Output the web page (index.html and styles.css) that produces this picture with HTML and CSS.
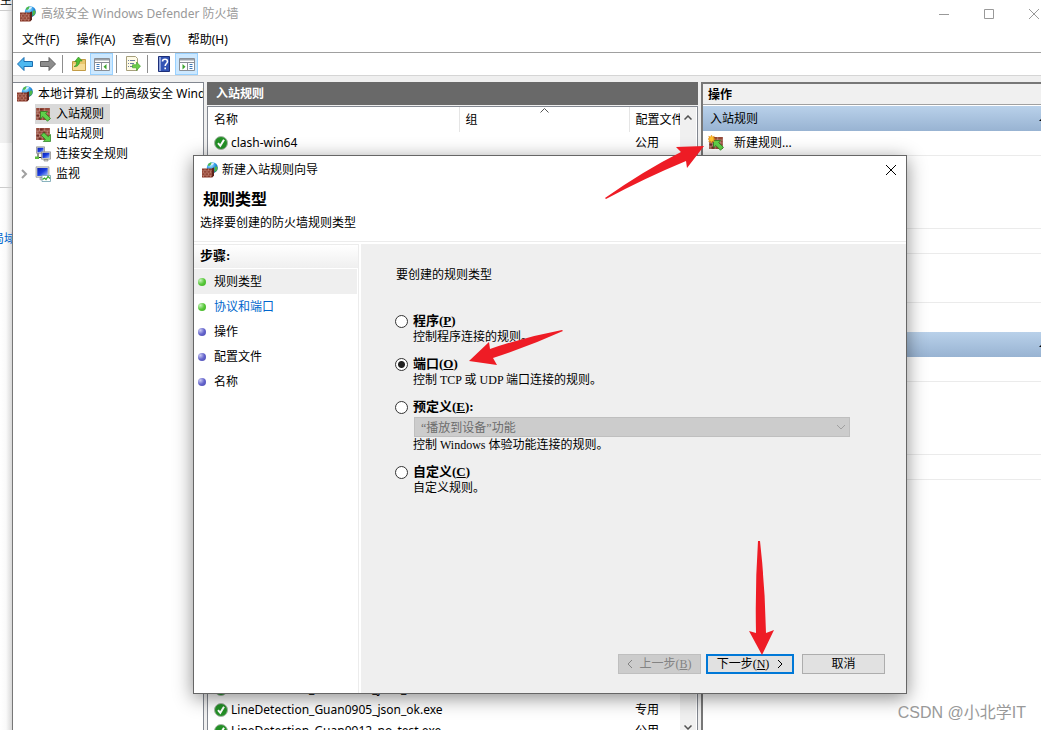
FILE: index.html
```html
<!DOCTYPE html>
<html lang="zh-CN">
<head>
    <meta charset="UTF-8">
    <meta name="viewport" content="width=device-width, initial-scale=1.0">
    <title>高级安全 Windows Defender 防火墙</title>
    <link rel="stylesheet" href="styles.css">
</head>
<body>
    <svg width="0" height="0" class="sprite">
        <defs>
            <radialGradient id="g-globe" cx="35%" cy="25%" r="80%">
                <stop offset="0" stop-color="#b8ecff"/><stop offset=".5" stop-color="#2d9be8"/><stop offset="1" stop-color="#0b4da0"/>
            </radialGradient>
            <linearGradient id="g-screen" x1="0" y1="0" x2="1" y2="1">
                <stop offset="0" stop-color="#0a1fae"/><stop offset=".5" stop-color="#1c3fe0"/><stop offset="1" stop-color="#a9c4ff"/>
            </linearGradient>
            <symbol id="wall" viewBox="0 0 16 14">
                <path fill="#96493a" d="M0 0h16v14H0z"/>
                <path stroke="#c9a397" stroke-width=".7" d="M0 3.500h16M0 7h16M0 10.500h16M4 0v3.500M10 0v3.500M2 3.500v3.500M7 3.500v3.500M13 3.500v3.500M4 7v3.500M10 7v3.500M2 10.500v3.500M7 10.500v3.500M13 10.500v3.500"/>
                <path fill="#6c2d24" d="M4.500 1h3v2h-3zM7.500 4.500h3v2h-3zM.5 7.800h3v2h-3zM3 11.300h3v2H3z"/>
            </symbol>
            <symbol id="firewall" viewBox="0 0 16 16">
                <circle cx="10.300" cy="5.700" r="5.500" fill="url(#g-globe)"/>
                <path fill="#4fb84a" d="M6 2.500C7 1 8.500.4 9.500.6S9 2.800 8 3.500 5.500 4 6 2.500zM13 5c1-.8 2.300-.5 2.500.7s-.8 3.300-2 4-1.300-1-1-2S12.300 5.500 13 5z"/>
                <path fill="#fff" opacity=".7" d="M9.500 1.300c1-.6 2-.5 2.500 0S10.800 2.800 10 3.200 8.500 2 9.500 1.300z"/>
                <path fill="#8a3b2c" d="M0 6.500h10l2-1v8L10 15.500H0z"/>
                <path fill="#5e241c" d="M10 6.500l2-1v8l-2 2z"/>
                <path fill="none" stroke="#c98f80" stroke-width=".6" d="M0 8.800h10M0 11h10M0 13.200h10M3 6.500v2.300M6.500 6.500v2.300M1.500 8.800V11M5 8.800V11M8.500 8.800V11M3 11v2.200M6.500 11v2.200M1.500 13.200v2.300M5 13.200v2.300M8.500 13.200v2.300"/>
            </symbol>
            <symbol id="inbound" viewBox="0 0 16 16">
                <use href="#wall" y="2" width="16" height="12"/>
                <path fill="#5fd04a" stroke="#237a18" stroke-width=".7" d="M5.500 5.500h7.200l-2 2.200 4.800 4.600-3 3-4.600-4.700-2.400 2.200z"/>
            </symbol>
            <symbol id="outbound" viewBox="0 0 16 16">
                <use href="#wall" y="2" width="16" height="12"/>
                <path fill="#5fd04a" stroke="#237a18" stroke-width=".7" d="M15.500 15.500H8.300l2.100-2.100-4.200-4.100 2.700-2.700 4.300 4.100 2.300-2.200z"/>
            </symbol>
            <symbol id="newrule" viewBox="0 0 16 16">
                <use href="#inbound" width="16" height="16"/>
                <path fill="#ffc22e" stroke="#e08a10" stroke-width=".5" d="M3.500 0l.8 2 2-.8-.8 2 2 .8-2 .8.8 2-2-.8-.8 2-.8-2-2 .8.8-2-2-.8 2-.8-.8-2 2 .8z"/>
            </symbol>
            <symbol id="network" viewBox="0 0 16 16">
                <path fill="#d9d9d2" stroke="#777" stroke-width=".6" d="M1.500.8h8v6.500h-8z"/>
                <path fill="url(#g-screen)" d="M2.500 1.800h6v4.500h-6z"/>
                <path fill="none" stroke="#222" d="M3 7.500v4h4"/>
                <path fill="#5cc03c" d="M0 10.500h4v2.500H0z"/>
                <path fill="#d9d9d2" stroke="#777" stroke-width=".6" d="M6.500 5.800h9v7.400h-9zM9 13.500h4V15H9z"/>
                <path fill="url(#g-screen)" d="M7.500 6.800h7v5.200h-7z"/>
            </symbol>
            <symbol id="monitor" viewBox="0 0 16 16">
                <path fill="#d9d9d2" stroke="#888" stroke-width=".6" d="M1 .8h13v10.500H1zM5 11.500h4v2.300H5z"/>
                <path fill="url(#g-screen)" d="M2.300 2h10.400v8H2.300z"/>
                <path fill="#fff" stroke="#6d9fae" stroke-width=".8" d="M7 9.500h8.500v6H7z"/>
                <path fill="none" stroke="#39a82c" stroke-width="1.200" d="M7.500 13.500l2-1.500 1.500 1.500 2-3 2 2"/>
            </symbol>
            <symbol id="ok" viewBox="0 0 14 14">
                <circle cx="7" cy="7" r="6.500" fill="#239026" stroke="#a8b5a8"/>
                <path fill="none" stroke="#fff" stroke-width="2" d="M4 7.200l2.300 2.600L10 3.800"/>
            </symbol>
            <symbol id="close" viewBox="0 0 12 12">
                <path fill="none" stroke="currentColor" d="M1 1l10 10M11 1L1 11"/>
            </symbol>
        </defs>
    </svg>

    <div class="desktop">
        <div class="behind">
            <div class="behind-tab">至</div>
            <div class="behind-bar"></div>
            <div class="behind-head"></div>
            <div class="behind-item"></div>
            <div class="behind-body"><a href="#">局域</a></div>
        </div>

        <main class="window">
            <header class="titlebar">
                <svg class="icon"><use href="#firewall"/></svg>
                <h1>高级安全 Windows Defender 防火墙</h1>
                <div class="caption-buttons">
                    <button aria-label="最小化"><svg viewBox="0 0 12 12"><path fill="none" stroke="currentColor" d="M1 6.500h10"/></svg></button>
                    <button aria-label="最大化"><svg viewBox="0 0 12 12"><path fill="none" stroke="currentColor" d="M1.500 1.500h9v9h-9z"/></svg></button>
                    <button aria-label="关闭"><svg><use href="#close"/></svg></button>
                </div>
            </header>

            <nav class="menubar">
                <button>文件(F)</button>
                <button>操作(A)</button>
                <button>查看(V)</button>
                <button>帮助(H)</button>
            </nav>

            <div class="toolbar">
                <button aria-label="后退"><svg class="icon" viewBox="0 0 16 16"><path fill="#4db8f0" stroke="#1a6db0" d="M.5 8L7 1.500v4h8.500v5H7v4z"/></svg></button>
                <button aria-label="前进"><svg class="icon" viewBox="0 0 16 16"><path fill="#8d8d8d" stroke="#636363" d="M15.500 8L9 1.500v4H.5v5H9v4z"/></svg></button>
                <span class="separator"></span>
                <button aria-label="上移"><svg class="icon" viewBox="0 0 16 16"><path fill="#e9c66c" stroke="#c39c46" d="M1.500 5.500H8l1-2h5.500v11h-13z"/><path fill="#f6dc96" d="M2 8h12v6H2z"/><path fill="#4fbf35" stroke="#2c8a1c" stroke-width=".6" d="M3 10.500c2-.5 2.500-2 2.700-5H3.800L7.500 1l3.700 4H8.700C8.500 8.500 6.500 11 3 10.500z"/></svg></button>
                <button class="pressed" aria-label="显示/隐藏控制台树"><svg class="icon" viewBox="0 0 16 16"><path fill="#fff" stroke="#8a8f96" d="M.5 2.500h15v12H.5z"/><path fill="#9aa0a8" d="M1 3h14v1.500H1z"/><path stroke="#8a8f96" d="M1 6.500h14M7.500 7v7"/><path stroke="#3e78b8" d="M2.500 8.500h3M2.500 10.500h3M2.500 12.500h3"/><path fill="#3da52e" d="M12.500 8v5.500L9.500 10.700z"/></svg></button>
                <span class="separator"></span>
                <button aria-label="导出列表"><svg class="icon" viewBox="0 0 16 16"><path fill="#fffbe6" stroke="#a69f7c" d="M1.500.5h9l2 2v12h-11z"/><path stroke="#6d7fa3" d="M3 4.500h1M5 4.500h5M3 7.500h1M5 7.500h4M3 10.500h1M5 10.500h3"/><path fill="#6bcf4b" stroke="#3c9a28" stroke-width=".6" d="M7.500 8.700h4V6l4 4.200-4 4.300v-2.700h-4z"/></svg></button>
                <span class="separator"></span>
                <button aria-label="帮助"><svg class="icon" viewBox="0 0 16 16"><path fill="#3354b5" stroke="#1d2f78" d="M2.500.5h11v15h-11z"/><path fill="#8da2dc" d="M3 1h2v14H3z"/><path fill="none" stroke="#fff" stroke-width="1.600" d="M6.500 5.500c0-3 5-3 5 0 0 2-2.300 2-2.300 4.500M9.200 11.500v1.800"/></svg></button>
                <button class="pressed" aria-label="显示/隐藏操作窗格"><svg class="icon" viewBox="0 0 16 16"><path fill="#fff" stroke="#8a8f96" d="M.5 2.500h15v12H.5z"/><path fill="#9aa0a8" d="M1 3h14v1.500H1z"/><path stroke="#8a8f96" d="M1 6.500h14M8.500 7v7"/><path stroke="#3e78b8" d="M10.500 8.500h3M10.500 10.500h3M10.500 12.500h3"/><path fill="#3da52e" d="M3.500 8v5.500l3-2.800z"/></svg></button>
            </div>

            <div class="panes">
                <ul class="tree">
                    <li class="root"><svg class="icon"><use href="#firewall"/></svg><span>本地计算机 上的高级安全 Windows</span></li>
                    <li class="selected"><svg class="icon"><use href="#inbound"/></svg><span>入站规则</span></li>
                    <li><svg class="icon"><use href="#outbound"/></svg><span>出站规则</span></li>
                    <li><svg class="icon"><use href="#network"/></svg><span>连接安全规则</span></li>
                    <li class="expandable"><svg class="expander" viewBox="0 0 8 12"><path fill="none" stroke="#a0a0a0" stroke-width="2" d="M2 2l4 4-4 4"/></svg><svg class="icon"><use href="#monitor"/></svg><span>监视</span></li>
                </ul>

                <section class="rules">
                    <h2>入站规则</h2>
                    <div class="rules-list">
                        <table>
                            <thead>
                                <tr>
                                    <th class="col-name">名称</th>
                                    <th class="col-group">组<svg class="sort" viewBox="0 0 9 5"><path fill="none" stroke="#555" d="M.5 4.500l4-4 4 4"/></svg></th>
                                    <th class="col-profile">配置文件</th>
                                </tr>
                            </thead>
                            <tbody>
                                <tr><td><svg class="ok"><use href="#ok"/></svg>clash-win64</td><td></td><td>公用</td></tr>
                                <tr class="covered"><td colspan="3"></td></tr>
                                <tr><td><svg class="ok"><use href="#ok"/></svg>LineDetection_Guan0904_json_ok.exe</td><td></td><td>专用</td></tr>
                                <tr><td><svg class="ok"><use href="#ok"/></svg>LineDetection_Guan0905_json_ok.exe</td><td></td><td>专用</td></tr>
                                <tr><td><svg class="ok"><use href="#ok"/></svg>LineDetection_Guan0912_no_test.exe</td><td></td><td>公用</td></tr>
                            </tbody>
                        </table>
                        <div class="scrollbar">
                            <svg viewBox="0 0 8 5"><path fill="none" stroke="#505050" stroke-width="1.500" d="M.5 4.500L4 1l3.500 3.500"/></svg>
                            <svg viewBox="0 0 8 5"><path fill="none" stroke="#505050" stroke-width="1.500" d="M.5.5L4 4 7.500.5"/></svg>
                        </div>
                    </div>
                </section>

                <aside class="actions">
                    <h2>操作</h2>
                    <h3>入站规则<svg viewBox="0 0 8 4"><path d="M0 4l4-4 4 4z"/></svg></h3>
                    <ul>
                        <li><svg class="icon"><use href="#newrule"/></svg><a href="#">新建规则...</a></li>
                        <li class="tall"></li>
                        <li></li>
                        <li class="double"></li>
                        <li class="last"></li>
                    </ul>
                    <h3><svg viewBox="0 0 8 4"><path d="M0 4l4-4 4 4z"/></svg></h3>
                    <ul>
                        <li></li>
                        <li class="tall"></li>
                        <li></li>
                    </ul>
                </aside>
            </div>
        </main>

        <div class="dialog" role="dialog" aria-labelledby="dialog-title">
            <header class="dialog-title">
                <svg class="icon"><use href="#firewall"/></svg>
                <h2 id="dialog-title">新建入站规则向导</h2>
                <button aria-label="关闭"><svg><use href="#close"/></svg></button>
            </header>
            <div class="dialog-head">
                <h3>规则类型</h3>
                <p>选择要创建的防火墙规则类型</p>
            </div>
            <div class="dialog-body">
                <nav class="steps">
                    <h4>步骤:</h4>
                    <ol>
                        <li class="done current">规则类型</li>
                        <li class="done"><a href="#">协议和端口</a></li>
                        <li>操作</li>
                        <li>配置文件</li>
                        <li>名称</li>
                    </ol>
                </nav>
                <form class="page">
                    <p class="question">要创建的规则类型</p>
                    <div class="options">
                        <div class="option">
                            <input type="radio" name="type" id="type-program">
                            <label for="type-program">程序(<u>P</u>)</label>
                            <p>控制程序连接的规则。</p>
                        </div>
                        <div class="option">
                            <input type="radio" name="type" id="type-port" checked>
                            <label for="type-port">端口(<u>O</u>)</label>
                            <p>控制 TCP 或 UDP 端口连接的规则。</p>
                        </div>
                        <div class="option">
                            <input type="radio" name="type" id="type-predefined">
                            <label for="type-predefined">预定义(<u>E</u>):</label>
                            <div class="select">
                                <select disabled aria-label="预定义">
                                    <option>“播放到设备”功能</option>
                                </select>
                                <svg viewBox="0 0 10 6"><path fill="none" stroke="#a0a0a0" d="M1 1l4 4 4-4"/></svg>
                            </div>
                            <p>控制 Windows 体验功能连接的规则。</p>
                        </div>
                        <div class="option">
                            <input type="radio" name="type" id="type-custom">
                            <label for="type-custom">自定义(<u>C</u>)</label>
                            <p>自定义规则。</p>
                        </div>
                    </div>
                    <div class="buttons">
                        <button type="button" disabled><svg viewBox="0 0 6 10"><path fill="none" stroke="currentColor" d="M5 1L1 5l4 4"/></svg><span>上一步(<u>B</u>)</span></button>
                        <button type="button" class="default"><span>下一步(<u>N</u>)</span><svg viewBox="0 0 6 10"><path fill="none" stroke="currentColor" d="M1 1l4 4-4 4"/></svg></button>
                        <button type="button" class="cancel">取消</button>
                    </div>
                </form>
            </div>
        </div>

        <svg class="arrows" width="1041" height="730" viewBox="0 0 1041 730">
            <path d="M605 198Q645 170 681 152L676 147 704 146 687 168 686 161Q645 178 606 199z"/>
            <path d="M562 330Q525 337 490 349L489 342 469 361 497 365 493 358Q530 346 563 331z"/>
            <path d="M758 541h2Q765 585 766 633L774 630 762 655 749 631 756 633Q755 585 758 541z"/>
        </svg>
        <div class="watermark">CSDN @小北学IT</div>
    </div>
</body>
</html>
```

FILE: styles.css
```css
* {
    margin: 0;
    padding: 0;
    box-sizing: border-box;
}

body {
    font: 12px/20px "Noto Sans", "Noto Sans CJK SC", sans-serif;
    color: #000;
    background: #fff;
    overflow: hidden;
}

h1, h2, h3, h4, th {
    font-size: inherit;
    font-weight: normal;
    text-align: left;
}

ul, ol {
    list-style: none;
}

a {
    color: inherit;
    text-decoration: none;
}

button {
    font: inherit;
    color: inherit;
    border: 0;
    background: none;
}

.sprite {
    position: absolute;
}

.icon {
    width: 16px;
    height: 16px;
    flex: none;
}

.desktop {
    position: relative;
    display: flex;
    height: 100vh;
    overflow: hidden;
}

/* page behind the console */
.behind {
    width: 12px;
    flex: none;
    display: flex;
    flex-direction: column;
    overflow: hidden;
    background: linear-gradient(to right, #fff, #fafafa 50%, #d8d8d8);
}

.behind-tab {
    height: 11px;
    line-height: 0;
    border-bottom: 1px solid #ccc;
}

.behind-bar {
    height: 49px;
}

.behind-head {
    height: 83px;
    background: rgba(0, 0, 0, .05);
}

.behind-item {
    height: 45px;
    border-bottom: 1px solid #ccc;
}

.behind-body {
    padding-top: 41px;
    white-space: nowrap;
    color: #0066cc;
}

.behind-body a {
    margin-left: -8px;
}

/* console window */
.window {
    flex: 1;
    min-width: 0;
    display: flex;
    flex-direction: column;
    border-left: 1px solid #777;
    background: #efefef;
}

.titlebar {
    display: flex;
    align-items: center;
    gap: 5px;
    height: 27px;
    padding-left: 7px;
    background: #fff;
    color: #999;
}

.titlebar h1 {
    flex: 1;
}

.caption-buttons {
    display: flex;
}

.caption-buttons button {
    width: 45px;
    height: 27px;
}

.caption-buttons button:last-child {
    margin-right: -15px;
}

.caption-buttons svg {
    width: 12px;
    height: 12px;
    vertical-align: middle;
}

.menubar {
    display: flex;
    gap: 17px;
    height: 26px;
    padding: 2px 0 0 9px;
    background: #fff;
    border-bottom: 1px solid #a0a0a0;
}

.menubar button {
    height: 22px;
}

.toolbar {
    display: flex;
    align-items: center;
    height: 23px;
    background: #fff;
    border-bottom: 1px solid #d5d5d5;
}

.toolbar button {
    display: flex;
    align-items: center;
    justify-content: center;
    width: 23px;
    height: 22px;
}

.toolbar .pressed {
    background: #cce8ff;
    border: 1px solid #99d1ff;
}

.separator {
    width: 1px;
    height: 18px;
    margin: 0 4px 0 3px;
    background: #8d8d8d;
}

.panes {
    flex: 1;
    min-height: 0;
    display: flex;
    gap: 3px;
    padding-top: 6px;
}

.tree {
    width: 191px;
    flex: none;
    overflow: hidden;
    white-space: nowrap;
    background: #fff;
    border: 1px solid #828790;
    border-width: 1px 1px 0 0;
    padding-top: 1px;
}

.tree li {
    display: flex;
    align-items: center;
    height: 20px;
    padding-left: 22px;
}

.tree .root {
    padding-left: 4px;
}

.tree .expandable {
    padding-left: 7px;
}

.tree span {
    padding: 0 3px 0 5px;
}

.tree .selected::before {
    content: "";
    width: 75px;
    height: 20px;
    margin-right: -75px;
    background: #d9d9d9;
}

.tree .selected > * {
    z-index: 1;
}

.expander {
    width: 8px;
    height: 12px;
    margin-right: 7px;
}

.rules {
    width: 491px;
    flex: none;
    display: flex;
    flex-direction: column;
}

.rules h2 {
    height: 23px;
    line-height: 23px;
    padding-left: 9px;
    font-weight: bold;
    color: #fff;
    background: #696969;
}

.rules-list {
    flex: 1;
    min-height: 0;
    display: flex;
    margin-top: 1px;
    padding-right: 1px;
    overflow: hidden;
    background: #fff;
    border: 1px solid #828790;
    border-bottom: 0;
}

.rules table {
    flex: 1;
    width: 100%;
    min-width: 0;
    table-layout: fixed;
    border-collapse: collapse;
    align-self: flex-start;
}

.rules th {
    position: relative;
    height: 25px;
    padding-left: 6px;
    overflow: hidden;
    white-space: nowrap;
    border-right: 1px solid #e5e5e5;
}

.rules .col-profile {
    border-right: 0;
}

.col-name {
    width: 251px;
}

.col-group {
    width: 170px;
}

.rules td {
    height: 21px;
    padding-left: 6px;
    white-space: nowrap;
}

.rules .covered td {
    height: 525px;
}

.sort {
    position: absolute;
    top: 1px;
    left: 50%;
    width: 9px;
    height: 5px;
    margin-left: -4px;
}

.ok {
    width: 14px;
    height: 14px;
    margin-right: 3px;
    vertical-align: -3px;
}

.scrollbar {
    width: 16px;
    flex: none;
    display: flex;
    flex-direction: column;
    align-items: center;
    justify-content: space-between;
    padding-top: 8px;
    background: #f0f0f0;
}

.scrollbar svg {
    width: 8px;
    height: 5px;
}

.actions {
    flex: 1;
    min-width: 0;
    background: #fff;
    border-left: 2px solid #777;
    border-top: 2px solid #777;
}

.actions h2 {
    height: 21px;
    line-height: 21px;
    padding-left: 5px;
    font-weight: bold;
    background: #f0f0f0;
    border-bottom: 1px solid #a0a0a0;
}

.actions h3 {
    display: flex;
    align-items: center;
    height: 25px;
    margin-top: 1px;
    padding-left: 7px;
    background: linear-gradient(#b9d1ea, #98b3d2);
}

.actions h3 svg {
    width: 8px;
    height: 4px;
    margin-left: auto;
    margin-right: -6px;
}

.actions li {
    display: flex;
    align-items: center;
    gap: 10px;
    height: 25px;
    padding-left: 5px;
    border-bottom: 1px solid #ebebeb;
}

.actions .tall {
    height: 73px;
}

.actions .double {
    height: 49px;
}

.actions .last {
    height: 28px;
    border-bottom: 0;
}

/* wizard */
.dialog {
    position: absolute;
    top: 155px;
    right: 134px;
    bottom: 36px;
    left: 193px;
    display: flex;
    flex-direction: column;
    background: #fff;
    border: 1px solid #666;
    box-shadow: 0 4px 18px rgba(0, 0, 0, .45);
    font-family: "Liberation Serif", "Noto Sans CJK SC", serif;
}

.dialog-title {
    display: flex;
    align-items: center;
    gap: 4px;
    height: 28px;
    padding: 0 9px 0 8px;
    font-family: "Noto Sans", "Noto Sans CJK SC", sans-serif;
}

.dialog-title h2 {
    flex: 1;
}

.dialog-title svg {
    display: block;
}

.dialog-title button svg {
    width: 12px;
    height: 12px;
}

.dialog-head {
    height: 58px;
    padding: 5px 6px;
    border-bottom: 1px solid #ececec;
}

.dialog-head h3 {
    padding-left: 3px;
    font-size: 16px;
    line-height: 22px;
    font-weight: bold;
}

.dialog-head p {
    line-height: 24px;
}

.dialog-body {
    flex: 1;
    display: flex;
    gap: 2px;
    padding-top: 2px;
}

.steps {
    width: 165px;
    border-right: 1px solid #ececec;
}

.steps h4 {
    height: 24px;
    line-height: 22px;
    padding-left: 6px;
    font-size: 13px;
    font-weight: bold;
    background: linear-gradient(#fff, #efefef);
    border-top: 1px solid #ececec;
}

.steps li {
    display: flex;
    align-items: center;
    gap: 8px;
    height: 25px;
    padding-left: 4px;
}

.steps li::before {
    content: "";
    width: 8px;
    height: 8px;
    border-radius: 50%;
    background: radial-gradient(circle at 30% 30%, #c9c9f2, #6464cc 50%, #4c4cb0);
}

.steps .done::before {
    background: radial-gradient(circle at 30% 30%, #c8f2bd, #58c83a 50%, #3dae22);
}

.steps ol {
    padding: 1px 1px 0 0;
}

.steps .current {
    background: #efefef;
}

.steps a {
    color: #0066cc;
}

.page {
    flex: 1;
    display: flex;
    flex-direction: column;
    padding: 21px 21px 19px 34px;
    background: #efefef;
}

.question {
    padding-left: 1px;
}

.options {
    display: flex;
    flex-direction: column;
    gap: 10px;
    margin-top: 28px;
}

.option {
    display: grid;
    grid-template-columns: 13px 1fr;
    column-gap: 5px;
    align-items: center;
}

.option > p, .option > .select {
    grid-column: 2;
}

.option p {
    line-height: 17px;
}

.option label {
    font-size: 13px;
    line-height: 16px;
    font-weight: bold;
}

.option input {
    appearance: none;
    width: 13px;
    height: 13px;
    border: 1px solid #333;
    border-radius: 50%;
    background: #fff;
}

.option input:checked {
    background: radial-gradient(circle, #222 3px, #fff 4px);
}

.select {
    position: relative;
    margin: 2px 35px 0 1px;
}

.select select {
    display: block;
    appearance: none;
    width: 100%;
    height: 20px;
    padding-left: 6px;
    font: inherit;
    color: #6d6d6d;
    opacity: 1;
    background: #ccc;
    border: 1px solid #bfbfbf;
    border-radius: 0;
}

.select svg {
    position: absolute;
    top: 7px;
    right: 4px;
    width: 10px;
    height: 6px;
}

.buttons {
    display: flex;
    justify-content: flex-end;
    align-items: center;
    gap: 5px;
    margin-top: auto;
}

.buttons button {
    display: flex;
    align-items: center;
    justify-content: center;
    gap: 6px;
    width: 83px;
    height: 20px;
    background: #e1e1e1;
    border: 1px solid #adadad;
}

.buttons svg {
    width: 6px;
    height: 10px;
}

.buttons button:disabled {
    color: #838383;
    background: #ccc;
    border-color: #bfbfbf;
}

.buttons .default {
    width: 88px;
    gap: 8px;
    border: 2px solid #0078d7;
}

.buttons .cancel {
    margin-left: 3px;
}

.arrows {
    position: absolute;
    top: 0;
    left: 0;
    fill: #ee1c25;
    pointer-events: none;
}

.watermark {
    position: absolute;
    right: 15px;
    bottom: 5px;
    font-family: "Liberation Sans", "Noto Sans CJK SC", sans-serif;
    font-size: 16px;
    line-height: 24px;
    color: #999;
}
```
